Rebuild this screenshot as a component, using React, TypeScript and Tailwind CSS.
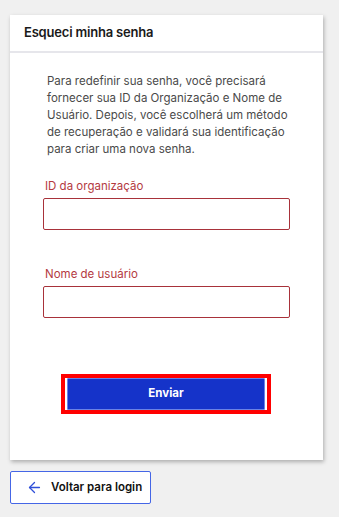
import { ArrowLeft } from 'lucide-react';

const font = { fontFamily: 'Inter, "Noto Sans", sans-serif' };

function Field({ label, className }: { label: string; className?: string }) {
    return (
        <div className={className}>
            <label className="block pl-[2px] text-[11.5px] leading-[14px] text-[#b43a3f]">{label}</label>
            <input
                type="text"
                className="mt-[5px] block h-[32px] w-[247px] rounded-[2px] border border-[#a8323a] bg-white outline-none"
            />
        </div>
    );
}

export default function App() {
    return (
        <div className="min-h-[517px] w-[339px] bg-[#f0f0f0] pt-[15px]" style={font}>
            <div className="ml-[10px] w-[313px] bg-white shadow-[1px_2px_4px_rgba(0,0,0,0.28)]">
                <div className="flex h-[38px] items-center border-b-2 border-[#e6e6eb] px-[14px]">
                    <h1 className="text-[13px] font-semibold tracking-[-0.2px] text-[#1a1a1a]">Esqueci minha senha</h1>
                </div>

                <div className="px-[33px] pt-[20px] pb-[46px]">
                    <p className="pl-[4px] text-[11.5px] leading-[17px] whitespace-nowrap text-[#4a4a4a]">
                        Para redefinir sua senha, você precisará
                        <br />
                        fornecer sua ID da Organização e Nome de
                        <br />
                        Usuário. Depois, você escolherá um método
                        <br />
                        de recuperação e validará sua identificação
                        <br />
                        para criar uma nova senha.
                    </p>

                    <Field label="ID da organização" className="mt-[21px]" />
                    <Field label="Nome de usuário" className="mt-[37px]" />

                    <div className="mt-[56px] ml-[18px] w-[210px] border-4 border-[#ff0000] px-[2px]">
                        <button className="flex h-[32px] w-[198px] items-center justify-center rounded-[1px] border border-[#6b82e6] bg-[#1533c9] text-[11.5px] font-bold text-white">
                            Enviar
                        </button>
                    </div>
                </div>
            </div>

            <button className="mt-[11px] ml-[10px] flex h-[33px] w-[141px] items-center rounded-[2px] border border-[#4566e6] bg-white pl-[15px]">
                <ArrowLeft className="h-[17px] w-[17px] text-[#2f4fd8]" strokeWidth={1.8} />
                <span className="ml-[8px] text-[11.5px] font-semibold text-[#111]">Voltar para login</span>
            </button>
        </div>
    );
}
